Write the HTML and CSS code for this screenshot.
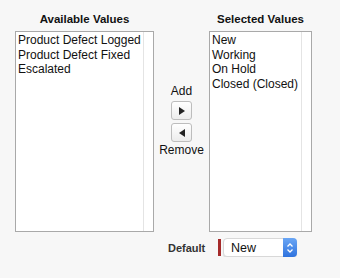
FILE: index.html
```html
<!DOCTYPE html>
<html lang="en">
<head>
    <title>Picklist Values</title>
    <link rel="stylesheet" href="styles.css">
</head>
<body>
    <div class="picklist">
        <div class="column available">
            <h2>Available Values</h2>
            <div class="listbox">
                <ul>
                    <li>Product Defect Logged</li>
                    <li>Product Defect Fixed</li>
                    <li>Escalated</li>
                </ul>
                <div class="scroll-track"></div>
            </div>
        </div>

        <div class="controls">
            <span class="control-label">Add</span>
            <button class="arrow-btn" title="Add">
                <svg width="6" height="8" viewBox="0 0 6 8"><path d="M0 0 L6 4 L0 8 Z" fill="#222"/></svg>
            </button>
            <button class="arrow-btn" title="Remove">
                <svg width="6" height="8" viewBox="0 0 6 8"><path d="M6 0 L0 4 L6 8 Z" fill="#222"/></svg>
            </button>
            <span class="control-label remove-label">Remove</span>
        </div>

        <div class="column selected">
            <h2>Selected Values</h2>
            <div class="listbox">
                <ul>
                    <li>New</li>
                    <li>Working</li>
                    <li>On Hold</li>
                    <li>Closed (Closed)</li>
                </ul>
                <div class="scroll-track"></div>
            </div>
        </div>
    </div>

    <div class="default-row">
        <span class="default-label">Default</span>
        <span class="required-bar"></span>
        <div class="select">
            <span class="select-value">New</span>
            <span class="stepper">
                <svg width="8" height="12" viewBox="0 0 8 12">
                    <path d="M1.5 4.5 L4 2 L6.5 4.5 M1.5 7.5 L4 10 L6.5 7.5" fill="none" stroke="#fff" stroke-width="1.3"/>
                </svg>
            </span>
        </div>
    </div>
</body>
</html>
```

FILE: styles.css
```css
body {
    margin: 0;
    background-color: #f7f7f7;
    font-family: "Liberation Sans", Arial, sans-serif;
    color: #111;
}

.picklist {
    display: flex;
    padding: 13px 0 0 15px;
}

.column h2 {
    margin: 0;
    height: 18px;
    font-size: 11.5px;
    font-weight: bold;
    text-align: center;
    white-space: nowrap;
}

.available {
    width: 139px;
}

.selected {
    width: 103px;
}

.listbox {
    display: flex;
    height: 201px;
    box-sizing: border-box;
    border: 1px solid #a9a9a9;
    background-color: white;
}

.listbox ul {
    flex: 1;
    min-width: 0;
    list-style: none;
    margin: 0;
    padding: 1px 0 0 2px;
    font-size: 12px;
    line-height: 14.5px;
    white-space: nowrap;
    overflow: hidden;
}

.scroll-track {
    width: 9px;
    flex-shrink: 0;
    border-left: 1px solid #e4e4e4;
}

.controls {
    width: 55px;
    display: flex;
    flex-direction: column;
    align-items: center;
    padding-top: 71px;
    gap: 3px;
}

.control-label {
    font-size: 12px;
    line-height: 14px;
}

.remove-label {
    margin-top: -2px;
}

.arrow-btn {
    width: 21px;
    height: 19px;
    padding: 0;
    display: flex;
    align-items: center;
    justify-content: center;
    background: linear-gradient(#ffffff, #ececec);
    border: 1px solid #bdbdbd;
    border-radius: 3px;
}

.default-row {
    display: flex;
    align-items: center;
    padding: 6px 0 0 168px;
}

.default-label {
    font-size: 11px;
    font-weight: bold;
    color: #333;
    width: 50px;
}

.required-bar {
    width: 3px;
    height: 17px;
    background-color: #a52a2a;
    margin-right: 2px;
}

.select {
    display: flex;
    align-items: center;
    width: 74px;
    height: 19px;
    box-sizing: border-box;
    background-color: white;
    border: 1px solid #d8d8d8;
    border-radius: 4px;
    box-shadow: 0 1px 1px rgba(0, 0, 0, 0.1);
}

.select-value {
    flex: 1;
    font-size: 12.5px;
    padding-left: 7px;
}

.stepper {
    width: 14px;
    height: 19px;
    margin-right: -1px;
    display: flex;
    align-items: center;
    justify-content: center;
    background: linear-gradient(#6aa6f5, #2f73de);
    border-radius: 0 4px 4px 0;
}
```
